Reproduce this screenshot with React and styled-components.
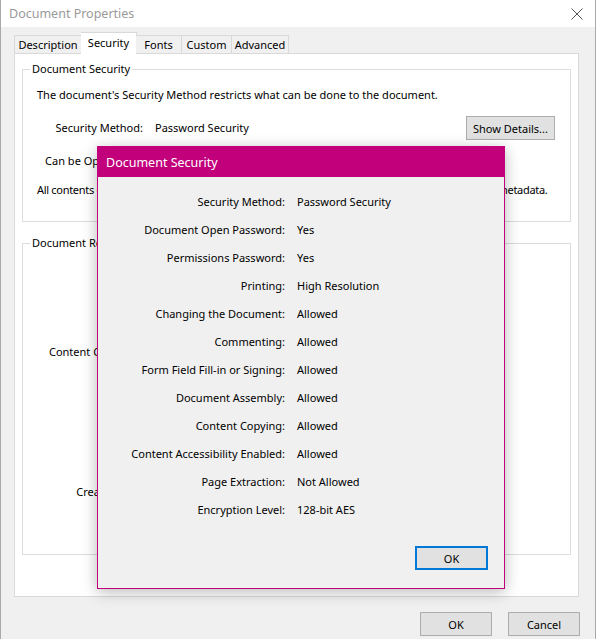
import React from "react";
import styled, { createGlobalStyle } from "styled-components";

const Global = createGlobalStyle`
  html, body { margin: 0; padding: 0; }
  body {
    font-family: "Noto Sans", "Open Sans", sans-serif;
    font-size: 11px;
    color: #000;
    background: #f0f0f0;
  }
`;

const Window = styled.div`
  position: relative;
  width: 596px;
  height: 639px;
  box-sizing: border-box;
  background: #f0f0f0;
  border-left: 1px solid #a9a9a9;
  border-right: 1px solid #a9a9a9;
  display: flex;
  flex-direction: column;
  overflow: hidden;
`;

const TitleBar = styled.div`
  height: 27px;
  flex: none;
  background: #fff;
  display: flex;
  align-items: center;
  justify-content: space-between;
  padding: 0 12px 0 8px;
`;

const Title = styled.div`
  color: #9a9a9a;
  font-size: 12.5px;
`;

const Body = styled.div`
  padding: 5px 15px 0 13px;
  display: flex;
  flex-direction: column;
`;

const TabRow = styled.div`
  display: flex;
  align-items: flex-end;
  height: 22px;
  position: relative;
  z-index: 1;
  margin-bottom: -1px;
`;

const Tab = styled.div`
  width: ${(p) => p.w}px;
  height: ${(p) => (p.active ? 22 : 19)}px;
  box-sizing: border-box;
  border: 1px solid #d9d9d9;
  border-bottom: ${(p) => (p.active ? "none" : "1px solid #d9d9d9")};
  margin-left: ${(p) => (p.active ? "-1px" : "0")};
  margin-right: ${(p) => (p.active ? "-1px" : "0")};
  background: ${(p) => (p.active ? "#fff" : "#f0f0f0")};
  display: flex;
  align-items: center;
  justify-content: center;
  padding-bottom: ${(p) => (p.active ? "2px" : "0")};
  & + & { border-left: ${(p) => (p.active ? "1px solid #d9d9d9" : "none")}; }
`;

const Panel = styled.div`
  height: 544px;
  margin-right: 1px;
  box-sizing: border-box;
  background: #fff;
  border: 1px solid #d9d9d9;
  padding: 7px 7px 0 7px;
  display: flex;
  flex-direction: column;
  gap: 13px;
`;

const Group = styled.fieldset`
  margin: 0;
  height: ${(p) => p.h}px;
  box-sizing: border-box;
  border: 1px solid #dcdcdc;
  padding: 0 0 0 14px;
  min-width: 0;
`;

const Legend = styled.legend`
  padding: 0 2px;
  margin-left: -7px;
  line-height: 16px;
`;

const Line = styled.div`
  line-height: 16px;
  margin-top: ${(p) => p.top}px;
  letter-spacing: ${(p) => (p.tight ? "-0.3px" : "normal")};
  white-space: nowrap;
`;

const InfoRow = styled.div`
  display: grid;
  grid-template-columns: ${(p) => p.label}px auto 1fr;
  column-gap: 12px;
  align-items: center;
  margin-top: ${(p) => p.top}px;
  padding-right: 15px;
  white-space: nowrap;
`;

const Label = styled.div`
  text-align: right;
  line-height: 16px;
`;

const Value = styled.div`
  line-height: 16px;
`;

const Button = styled.button`
  font: inherit;
  color: #000;
  width: ${(p) => p.w}px;
  height: ${(p) => p.h || 24}px;
  background: #e1e1e1;
  border: ${(p) => (p.focus ? "2px solid #0078d7" : "1px solid #adadad")};
  padding: 0;
  justify-self: end;
`;

const SummaryList = styled.div`
  display: flex;
  flex-direction: column;
  padding-top: 3px;
`;

const SummaryRow = styled.div`
  display: grid;
  grid-template-columns: 184px 1fr;
  column-gap: 12px;
  height: 28px;
  align-items: center;
  white-space: nowrap;
`;

const Footer = styled.div`
  display: flex;
  justify-content: flex-end;
  gap: 16px;
  padding-top: 15px;
`;

const Dialog = styled.div`
  position: absolute;
  left: 96px;
  top: 146px;
  width: 408px;
  height: 443px;
  box-sizing: border-box;
  border: 1px solid #c2007c;
  background: #f0f0f0;
  box-shadow: 0 3px 14px rgba(0, 0, 0, 0.28);
  display: flex;
  flex-direction: column;
`;

const DialogTitle = styled.div`
  height: 30px;
  flex: none;
  background: #c2007c;
  color: #fff;
  font-size: 12.5px;
  display: flex;
  align-items: center;
  padding-left: 8px;
`;

const DialogRows = styled.div`
  display: flex;
  flex-direction: column;
  padding-top: 11px;
`;

const DialogRow = styled.div`
  display: grid;
  grid-template-columns: 187px 1fr;
  column-gap: 12px;
  height: 28px;
  align-items: center;
  white-space: nowrap;
`;

const DialogFooter = styled.div`
  display: flex;
  justify-content: flex-end;
  padding: 22px 16px 0 0;
`;

const CloseIcon = () => (
  <svg width="12" height="12" viewBox="0 0 12 12">
    <path d="M0.5 0.5 L11.5 11.5 M11.5 0.5 L0.5 11.5" stroke="#555" strokeWidth="1" fill="none" />
  </svg>
);

const tabs = [
  ["Description", 68],
  ["Security", 56],
  ["Fonts", 46],
  ["Custom", 50],
  ["Advanced", 57],
];

const summary = [
  ["Printing", "High Resolution"],
  ["Document Assembly", "Allowed"],
  ["Content Copying", "Allowed"],
  ["Content Copying for Accessibility", "Allowed"],
  ["Page Extraction", "Not Allowed"],
  ["Commenting", "Allowed"],
  ["Filling of form fields", "Allowed"],
  ["Signing", "Allowed"],
  ["Creation of Template Pages", "Allowed"],
];

const security = [
  ["Security Method", "Password Security"],
  ["Document Open Password", "Yes"],
  ["Permissions Password", "Yes"],
  ["Printing", "High Resolution"],
  ["Changing the Document", "Allowed"],
  ["Commenting", "Allowed"],
  ["Form Field Fill-in or Signing", "Allowed"],
  ["Document Assembly", "Allowed"],
  ["Content Copying", "Allowed"],
  ["Content Accessibility Enabled", "Allowed"],
  ["Page Extraction", "Not Allowed"],
  ["Encryption Level", "128-bit AES"],
];

export default function App() {
  return (
    <>
      <Global />
      <Window>
        <TitleBar>
          <Title>Document Properties</Title>
          <CloseIcon />
        </TitleBar>
        <Body>
          <TabRow>
            {tabs.map(([name, w]) => (
              <Tab key={name} w={w} active={name === "Security"}>
                {name}
              </Tab>
            ))}
          </TabRow>
          <Panel>
            <Group h={161}>
              <Legend>Document Security</Legend>
              <Line top={10}>The document's Security Method restricts what can be done to the document.</Line>
              <InfoRow label={106} top={13}>
                <Label>Security Method:</Label>
                <Value>Password Security</Value>
                <Button w={89} h={24}>Show Details...</Button>
              </InfoRow>
              <InfoRow label={106} top={13}>
                <Label>Can be Opened by:</Label>
                <Value>Acrobat 7.0 and later</Value>
              </InfoRow>
              <Line top={13} tight>
                All contents of the document are encrypted and search engines cannot access the document's metadata.
              </Line>
            </Group>
            <Group h={320}>
              <Legend>Document Restrictions Summary</Legend>
              <SummaryList>
                {summary.map(([l, v]) => (
                  <SummaryRow key={l}>
                    <Label>{l}:</Label>
                    <Value>{v}</Value>
                  </SummaryRow>
                ))}
              </SummaryList>
            </Group>
          </Panel>
          <Footer>
            <Button w={72}>OK</Button>
            <Button w={72}>Cancel</Button>
          </Footer>
        </Body>
        <Dialog>
          <DialogTitle>Document Security</DialogTitle>
          <DialogRows>
            {security.map(([l, v]) => (
              <DialogRow key={l}>
                <Label>{l}:</Label>
                <Value>{v}</Value>
              </DialogRow>
            ))}
          </DialogRows>
          <DialogFooter>
            <Button w={73} focus>OK</Button>
          </DialogFooter>
        </Dialog>
      </Window>
    </>
  );
}
